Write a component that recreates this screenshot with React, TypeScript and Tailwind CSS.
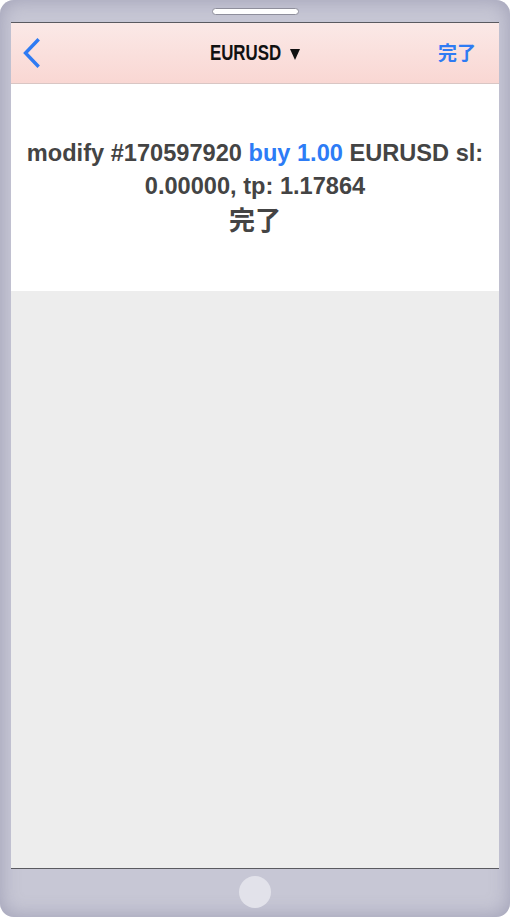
import React from 'react';

const sans = { fontFamily: '"Liberation Sans", "Noto Sans CJK JP", Arial, sans-serif' };

function BackChevron() {
  return (
    <svg width="18" height="30" viewBox="0 0 18 30" fill="none">
      <path d="M15.5 2.5 L3.5 15 L15.5 27.5" stroke="#2f7bf3" strokeWidth="3.4" strokeLinecap="square" />
    </svg>
  );
}

function Caret() {
  return (
    <svg width="10" height="11" viewBox="0 0 10 11" className="ml-[9px] mt-[2px]">
      <path d="M0 0 H10 L5 11 Z" fill="#111" />
    </svg>
  );
}

function NavBar() {
  return (
    <div className="h-[61px] flex items-center justify-between pl-[11px] pr-[23px] border-b border-[#d9c6c4] bg-gradient-to-b from-[#fbe9e7] to-[#f9d7d3]">
      <div className="w-[48px] flex items-center">
        <BackChevron />
      </div>
      <div className="flex items-center ml-[12px]">
        <span className="inline-block text-[22.5px] font-bold text-[#111] scale-x-[0.75] origin-center -mx-[12px]">
          EURUSD
        </span>
        <Caret />
      </div>
      <div className="w-[48px] flex justify-end">
        <span className="text-[19px] font-bold text-[#2f7bf3] leading-none">完了</span>
      </div>
    </div>
  );
}

export default function App() {
  return (
    <div className="w-[510px] h-[919px] bg-white" style={sans}>
      <div className="h-[917px] rounded-[14px] bg-[#c7c7d5] shadow-[inset_0_0_20px_rgba(150,150,175,0.85)] flex flex-col">
        <div className="h-[22px] flex justify-center pt-[8px]">
          <div className="w-[87px] h-[7px] rounded-full bg-white border border-[#8f8f9c]" />
        </div>
        <div className="mx-[11px] flex-1 flex flex-col border-t border-b border-[#5a5a60]">
          <NavBar />
          <div className="bg-white h-[207px] pt-[53px] text-center text-[#444] font-bold">
            <p className="text-[23.6px] leading-[33px] px-[4px]">
              modify #170597920 <span className="text-[#2d7cf6]">buy 1.00</span> EURUSD sl: 0.00000, tp: 1.17864
            </p>
            <p className="text-[26px] leading-[36px]">完了</p>
          </div>
          <div className="flex-1 bg-[#ededed]" />
        </div>
        <div className="h-[48px] flex justify-center pt-[7px]">
          <div className="w-[32px] h-[32px] rounded-full bg-[#e2e2ea]" />
        </div>
      </div>
    </div>
  );
}
